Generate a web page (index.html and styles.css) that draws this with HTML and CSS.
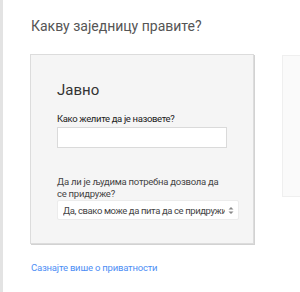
FILE: index.html
```html
<!DOCTYPE html>
<html lang="sr">
<head>
  <meta charset="UTF-8">
  <title>Нова заједница</title>
  <link rel="stylesheet" href="styles.css">
</head>
<body>
  <div class="edge"></div>
  <div class="main">
    <h1 class="title">Какву заједницу правите?</h1>
    <div class="row">
      <div class="card">
        <h2 class="card-title">Јавно</h2>
        <label class="field-label name" for="name">Како желите да је назовете?</label>
        <input class="field-input" type="text" id="name">
        <label class="field-label perm" for="perm">Да ли је људима потребна дозвола да се придруже?</label>
        <div class="select">
          <span class="select-text">Да, свако може да пита да се придружи</span>
          <span class="select-arrow">
            <svg width="6" height="9" viewBox="0 0 6 9"><path d="M0.5 3.5 L3 1 L5.5 3.5 Z M0.5 5.5 L3 8 L5.5 5.5 Z" fill="#888"/></svg>
          </span>
        </div>
      </div>
      <div class="side-card"></div>
    </div>
    <a class="more" href="#">Сазнајте више о приватности</a>
  </div>
</body>
</html>
```

FILE: styles.css
```css
html, body {
  margin: 0;
  height: 100%;
  overflow: hidden;
  background: #fff;
}

body {
  display: flex;
  font-family: Roboto, "Liberation Sans", Arial, sans-serif;
  color: #222;
}

.edge {
  width: 3px;
  flex: none;
  background: #e3e3e3;
}

.main {
  flex: 1;
  padding: 17px 0 0 27px;
}

.title {
  margin: 0 0 19px 1px;
  font-size: 14px;
  font-weight: 400;
  color: #555;
  line-height: 18px;
}

.row {
  display: flex;
  gap: 28px;
  align-items: flex-start;
}

.card {
  flex: none;
  width: 182px;
  padding: 26px 14px 23px 26px;
  background: #f5f5f5;
  border: 1px solid #dcdcdc;
  box-shadow: 1px 1px 0 #d2d2d2;
}

.card-title {
  margin: 0 0 13px;
  font-size: 15px;
  font-weight: 400;
  color: #333;
  line-height: 18px;
}

.field-label {
  display: block;
  font-size: 9.5px;
  line-height: 12px;
  letter-spacing: -0.25px;
  color: #444;
}

.name {
  line-height: 13px;
  letter-spacing: -0.35px;
  color: #1a1a1a;
  margin-bottom: 2px;
}

.perm {
  width: 170px;
}

.field-input {
  display: block;
  box-sizing: border-box;
  width: 170px;
  height: 21px;
  margin: 0 0 28px;
  border: 1px solid #dadada;
  background: #fff;
  padding: 0 4px;
}

.select {
  display: flex;
  align-items: center;
  box-sizing: border-box;
  width: 182px;
  height: 20px;
  background: #fff;
  border: 1px solid #ececec;
  border-radius: 2px;
  padding: 0 4px 0 5px;
}

.select-text {
  flex: 1;
  overflow: hidden;
  white-space: nowrap;
  font-size: 9.5px;
  letter-spacing: -0.4px;
  color: #444;
}

.select-arrow {
  display: flex;
  margin-left: 3px;
}

.side-card {
  flex: none;
  width: 100px;
  height: 140px;
  margin-top: 1px;
  background: #fafafa;
  border: 1px solid #efefef;
}

.more {
  display: inline-block;
  margin: 18px 0 0 1px;
  font-size: 9.5px;
  line-height: 12px;
  letter-spacing: -0.2px;
  color: #4d8ef5;
  text-decoration: none;
}
```
